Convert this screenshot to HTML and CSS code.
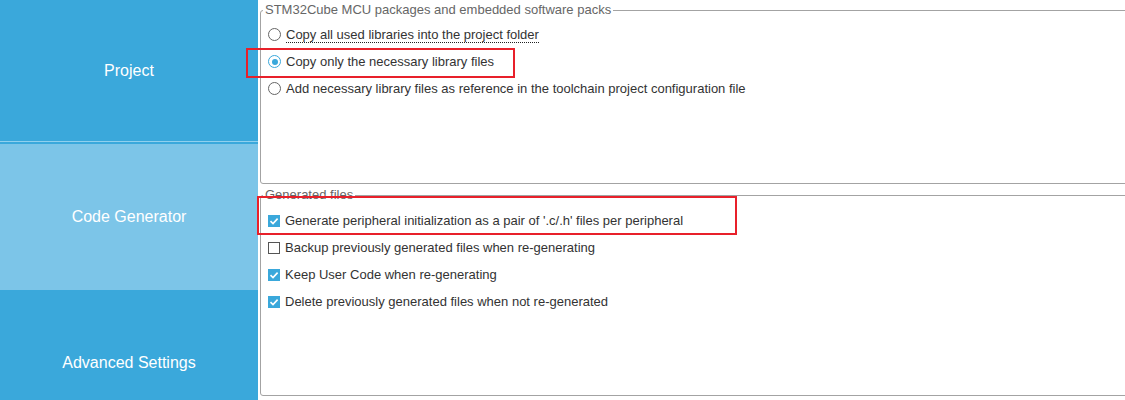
FILE: index.html
```html
<!DOCTYPE html>
<html lang="en">
<head>
    <meta charset="UTF-8">
    <meta name="viewport" content="width=device-width, initial-scale=1.0">
    <title>Project Manager - Code Generator</title>
    <link rel="stylesheet" href="styles.css">
</head>
<body>

    <div class="app">
        <!-- Left tab column -->
        <nav class="sidebar">
            <div class="tab tab-project">Project</div>
            <div class="tab tab-active">Code Generator</div>
            <div class="tab">Advanced Settings</div>
        </nav>

        <!-- Settings panel -->
        <main class="content">
            <fieldset class="group group-packs">
                <legend>STM32Cube MCU packages and embedded software packs</legend>

                <label class="option">
                    <span class="radio"></span>
                    <span class="option-text focused">Copy all used libraries into the project folder</span>
                </label>
                <label class="option">
                    <span class="radio checked"></span>
                    <span class="option-text">Copy only the necessary library files</span>
                </label>
                <label class="option">
                    <span class="radio"></span>
                    <span class="option-text">Add necessary library files as reference in the toolchain project configuration file</span>
                </label>
            </fieldset>

            <fieldset class="group group-files">
                <legend>Generated files</legend>

                <label class="option">
                    <span class="checkbox checked">
                        <svg viewBox="0 0 12 12" width="12" height="12"><polyline points="2.5,6.2 5,8.6 9.6,3.6" fill="none" stroke="#fff" stroke-width="1.6"/></svg>
                    </span>
                    <span class="option-text">Generate peripheral initialization as a pair of '.c/.h' files per peripheral</span>
                </label>
                <label class="option">
                    <span class="checkbox"></span>
                    <span class="option-text">Backup previously generated files when re-generating</span>
                </label>
                <label class="option">
                    <span class="checkbox checked">
                        <svg viewBox="0 0 12 12" width="12" height="12"><polyline points="2.5,6.2 5,8.6 9.6,3.6" fill="none" stroke="#fff" stroke-width="1.6"/></svg>
                    </span>
                    <span class="option-text">Keep User Code when re-generating</span>
                </label>
                <label class="option">
                    <span class="checkbox checked">
                        <svg viewBox="0 0 12 12" width="12" height="12"><polyline points="2.5,6.2 5,8.6 9.6,3.6" fill="none" stroke="#fff" stroke-width="1.6"/></svg>
                    </span>
                    <span class="option-text">Delete previously generated files when not re-generated</span>
                </label>
            </fieldset>
        </main>

        <!-- Red highlight boxes drawn on top of the screenshot -->
        <div class="mark mark-copy"></div>
        <div class="mark mark-generate"></div>
    </div>

</body>
</html>
```

FILE: styles.css
```css
/* Page */
body {
    margin: 0;
    background: #fff;
    font-family: "Liberation Sans", Arial, sans-serif;
    overflow: hidden;
}

.app {
    position: relative;
    display: flex;
    height: 400px;
    overflow: hidden;
}

/* Sidebar tabs */
.sidebar {
    width: 258px;
    flex-shrink: 0;
    display: flex;
    flex-direction: column;
    background-color: #3aa8db;
}

.tab {
    height: 146px;
    flex-shrink: 0;
    display: flex;
    justify-content: center;
    align-items: center;
    color: #fff;
    font-size: 16px;
    background-color: #3aa8db;
}

.tab-project {
    height: 144px;
    box-sizing: border-box;
    padding-bottom: 2px;
    box-shadow: inset 0 -2px #3aa8db, inset 0 -3px #8fd0ee;
}

.tab-active {
    background-color: #7cc5e8;
}

/* Content area */
.content {
    flex: 1;
    padding: 3px 0 0 2px;
    margin-right: -20px;
}

/* Fieldset groups */
.group {
    margin: 0;
    padding: 4px 0 0 7px;
    border: 1px solid #a3a3a3;
    border-radius: 3px;
    box-sizing: border-box;
}

.group legend {
    padding: 0 2px;
    margin-left: -5px;
    font-size: 13px;
    line-height: 14px;
    color: #666;
}

.group-packs {
    height: 181px;
}

.group-files {
    height: 208px;
    margin-top: 4px;
    padding-top: 5px;
}

/* Option rows */
.option {
    display: flex;
    align-items: center;
    height: 27px;
    font-size: 13px;
    color: #333;
}

.option-text {
    margin-left: 5px;
    line-height: 14px;
}

.focused {
    border-bottom: 1px dotted #222;
    margin-top: 2px;
}

/* Radio buttons */
.radio {
    width: 11px;
    height: 11px;
    border: 1px solid #666;
    border-radius: 50%;
    background: #fff;
    position: relative;
    flex-shrink: 0;
}

.radio.checked {
    border-color: #3aa8db;
}

.radio.checked::after {
    content: "";
    position: absolute;
    left: 2.5px;
    top: 2.5px;
    width: 6px;
    height: 6px;
    border-radius: 50%;
    background: #3aa8db;
}

/* Checkboxes */
.checkbox {
    width: 12px;
    height: 12px;
    box-sizing: border-box;
    border: 1px solid #555;
    background: #fff;
    flex-shrink: 0;
}

.checkbox.checked {
    border: none;
    background: #3aa8db;
}

.checkbox svg {
    display: block;
}

/* Red annotation boxes */
.mark {
    position: absolute;
    border: 2px solid #e8202a;
    box-sizing: border-box;
}

.mark-copy {
    left: 246px;
    top: 48px;
    width: 269px;
    height: 30px;
}

.mark-generate {
    left: 257px;
    top: 196px;
    width: 480px;
    height: 39px;
}
```
